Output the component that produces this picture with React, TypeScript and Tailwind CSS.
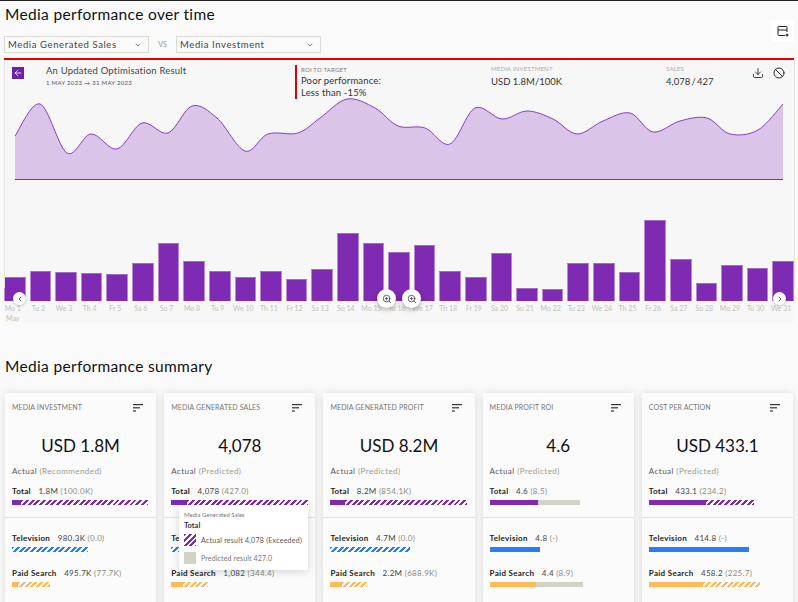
import React from "react";
import { ArrowLeft, ChevronDown, ChevronLeft, ChevronRight, Ban, Download, ZoomIn } from "lucide-react";

const areaPoints: [number, number][] = [
  [0, 47], [25, 15], [52, 64], [76, 45], [102, 60], [127, 34], [153, 44], [177, 17], [202, 29], [230, 62],
  [253, 45], [283, 44], [305, 29], [332, 10], [360, 19], [383, 37], [410, 39], [435, 55], [460, 19], [487, 30],
  [512, 22], [538, 30], [562, 45], [588, 32], [615, 24], [638, 43], [665, 32], [692, 29], [715, 45], [743, 41], [768, 15],
];

// catmull-rom through the points, flat bottom at y=91
function smoothPath(pts: [number, number][]) {
  let d = `M${pts[0][0]} ${pts[0][1]}`;
  for (let i = 0; i < pts.length - 1; i++) {
    const p0 = pts[i - 1] || pts[i];
    const p1 = pts[i];
    const p2 = pts[i + 1];
    const p3 = pts[i + 2] || p2;
    const c1x = p1[0] + (p2[0] - p0[0]) / 6;
    const c1y = p1[1] + (p2[1] - p0[1]) / 6;
    const c2x = p2[0] - (p3[0] - p1[0]) / 6;
    const c2y = p2[1] - (p3[1] - p1[1]) / 6;
    d += ` C${c1x} ${c1y} ${c2x} ${c2y} ${p2[0]} ${p2[1]}`;
  }
  return d;
}

const barHeights = [24, 30, 29, 28, 27, 38, 58, 40, 30, 24, 30, 22, 32, 68, 58, 49, 56, 30, 24, 48, 13, 12, 38, 38, 29, 81, 42, 18, 36, 33, 40];
const dayLabels = ["Mo 1", "Tu 2", "We 3", "Th 4", "Fr 5", "Sa 6", "Su 7", "Mo 8", "Tu 9", "We 10", "Th 11", "Fr 12", "Sa 13", "Su 14", "Mo 15", "Tu 16", "We 17", "Th 18", "Fr 19", "Sa 20", "Su 21", "Mo 22", "Tu 23", "We 24", "Th 25", "Fr 26", "Sa 27", "Su 28", "Mo 29", "Tu 30", "We 31"];

const solidClass = { purple: "bg-[#7f2ab2]", blue: "bg-[#2a7df6]", orange: "bg-[#ffb957]" };
const hatchClass = {
  purple: "bg-[repeating-linear-gradient(135deg,#7f2ab2_0,#7f2ab2_2px,transparent_2px,transparent_4px)]",
  blue: "bg-[repeating-linear-gradient(135deg,#2a7df6_0,#2a7df6_2px,transparent_2px,transparent_4px)]",
  orange: "bg-[repeating-linear-gradient(135deg,#ffb957_0,#ffb957_2px,transparent_2px,transparent_4px)]",
};

type Color = "purple" | "blue" | "orange";
type Meter = { label: string; value: string; extra: string; solid: number; rest: number; restKind: "hatch" | "grey" };

const cards: { title: string; big: string; note: string; total: Meter; tv: Meter; paid: Meter }[] = [
  {
    title: "MEDIA INVESTMENT", big: "USD 1.8M", note: "(Recommended)",
    total: { label: "Total", value: "1.8M", extra: "(100.0K)", solid: 9, rest: 127, restKind: "hatch" },
    tv: { label: "Television", value: "980.3K", extra: "(0.0)", solid: 0, rest: 76, restKind: "hatch" },
    paid: { label: "Paid Search", value: "495.7K", extra: "(77.7K)", solid: 6, rest: 32, restKind: "hatch" },
  },
  {
    title: "MEDIA GENERATED SALES", big: "4,078", note: "(Predicted)",
    total: { label: "Total", value: "4,078", extra: "(427.0)", solid: 16, rest: 121, restKind: "hatch" },
    tv: { label: "Television", value: "", extra: "", solid: 0, rest: 76, restKind: "hatch" },
    paid: { label: "Paid Search", value: "1,082", extra: "(344.4)", solid: 12, rest: 25, restKind: "hatch" },
  },
  {
    title: "MEDIA GENERATED PROFIT", big: "USD 8.2M", note: "(Predicted)",
    total: { label: "Total", value: "8.2M", extra: "(854.1K)", solid: 15, rest: 122, restKind: "hatch" },
    tv: { label: "Television", value: "4.7M", extra: "(0.0)", solid: 0, rest: 80, restKind: "hatch" },
    paid: { label: "Paid Search", value: "2.2M", extra: "(688.9K)", solid: 12, rest: 25, restKind: "hatch" },
  },
  {
    title: "MEDIA PROFIT ROI", big: "4.6", note: "(Predicted)",
    total: { label: "Total", value: "4.6", extra: "(8.5)", solid: 48, rest: 42, restKind: "grey" },
    tv: { label: "Television", value: "4.8", extra: "(-)", solid: 50, rest: 0, restKind: "grey" },
    paid: { label: "Paid Search", value: "4.4", extra: "(8.9)", solid: 46, rest: 47, restKind: "grey" },
  },
  {
    title: "COST PER ACTION", big: "USD 433.1", note: "(Predicted)",
    total: { label: "Total", value: "433.1", extra: "(234.2)", solid: 57, rest: 48, restKind: "hatch" },
    tv: { label: "Television", value: "414.8", extra: "(-)", solid: 100, rest: 0, restKind: "hatch" },
    paid: { label: "Paid Search", value: "458.2", extra: "(225.7)", solid: 54, rest: 57, restKind: "hatch" },
  },
];

function SortIcon() {
  return (
    <svg width="10" height="8" viewBox="0 0 10 8" className="text-[#333]">
      <rect x="0" y="0" width="10" height="1.2" fill="currentColor" />
      <rect x="0" y="3.2" width="7" height="1.2" fill="currentColor" />
      <rect x="0" y="6.4" width="3" height="1.2" fill="currentColor" />
    </svg>
  );
}

function MeterRow({ m, color }: { m: Meter; color: Color }) {
  return (
    <div>
      <div className="flex h-[12px] items-center gap-[7.5px] whitespace-nowrap text-[8px] leading-[12px] tracking-[0.3px]">
        <span className="font-bold text-[#222]">{m.label}</span>
        <span className="text-[#444]">
          {m.value} <span className="text-[#8c8c80]">{m.extra}</span>
        </span>
      </div>
      <div className="mt-[3px] flex h-[5px]">
        {m.solid > 0 && <div className={`h-full ${solidClass[color]}`} style={{ width: m.solid }} />}
        {m.rest > 0 && (
          <div
            className={`h-full ${m.restKind === "grey" ? "bg-[#d2d2c6]" : hatchClass[color]}`}
            style={{ width: m.rest }}
          />
        )}
      </div>
    </div>
  );
}

function SelectBox({ label, width }: { label: string; width: string }) {
  return (
    <div className={`flex h-[17px] items-center justify-between border border-[#ddddd5] pl-[3px] pr-[6px] pt-px text-[9.5px] tracking-[0.6px] text-[#444] ${width}`}>
      <span>{label}</span>
      <ChevronDown size={8} strokeWidth={2} className="text-[#555]" />
    </div>
  );
}

export default function App() {
  const line = smoothPath(areaPoints);

  return (
    <div className="relative h-[602px] w-[798px] overflow-hidden border-t border-t-[#222] bg-[#fafafa] font-['Lato',sans-serif]">
      <h1 className="ml-[5px] mt-[3px] h-[20px] text-[15.5px] leading-[20px] tracking-[0.33px] text-[#111]">
        Media performance over time
      </h1>

      {/* floating config button */}
      <div className="absolute left-[771px] top-[19px] flex h-[22px] w-[23px] items-center justify-center bg-white">
        <svg width="12" height="12" viewBox="0 0 12 12" fill="none" stroke="#222" strokeWidth="1">
          <path d="M8 10.5H2a1 1 0 0 1-1-1v-7a1 1 0 0 1 1-1h7a1 1 0 0 1 1 1V7" />
          <path d="M1 5h9" />
          <circle cx="10" cy="10" r="1.5" fill="#444" stroke="none" />
        </svg>
      </div>

      <div className="ml-[4px] mt-[12px] flex items-center">
        <SelectBox label="Media Generated Sales" width="w-[145px]" />
        <span className="w-[27px] text-center text-[7px] text-[#999]">VS</span>
        <SelectBox label="Media Investment" width="w-[145px]" />
      </div>

      {/* chart panel */}
      <div className="relative ml-[4px] mt-[5px] h-[265px] w-[790px] border-t-2 border-t-[#e00000] bg-[#f7f7f7]">
        <div className="absolute bottom-[35px] left-0 top-0 w-px bg-[#e4e4dc]" />
        <div className="absolute bottom-[35px] right-[-1px] top-0 w-px bg-[#e4e4dc]" />

        <div className="flex h-[38px] pt-[5px]">
          <div className="ml-[8px] mt-[2px] flex h-[12px] w-[12px] items-center justify-center bg-[#6f1fa8]">
            <ArrowLeft size={10} strokeWidth={2} className="text-white" />
          </div>
          <div className="ml-[22px] w-[250px]">
            <div className="text-[9.5px] leading-[12px] tracking-[0.2px] text-[#444]">An Updated Optimisation Result</div>
            <div className="mt-[1px] text-[6px] leading-[9px] tracking-[0.3px] text-[#555]">1 MAY 2023 → 31 MAY 2023</div>
          </div>
          <div className="-ml-px h-[34px] w-[196px] border-l-2 border-l-[#e00000] pl-[4px]">
            <div className="mt-px text-[6px] leading-[8px] tracking-[0.2px] text-[#777]">ROI TO TARGET</div>
            <div className="mt-[1px] text-[9.5px] leading-[12px] tracking-[0.15px] text-[#333]">
              Poor performance:
              <br />
              Less than -15%
            </div>
          </div>
          <div className="w-[175px]">
            <div className="text-[6px] leading-[8px] tracking-[0.2px] text-[#aaa]">MEDIA INVESTMENT</div>
            <div className="mt-[3px] text-[9.5px] leading-[12px] text-[#333]">USD 1.8M/100K</div>
          </div>
          <div className="w-[86px]">
            <div className="text-[6px] leading-[8px] tracking-[0.2px] text-[#aaa]">SALES</div>
            <div className="mt-[3px] text-[9.5px] leading-[12px] text-[#333]">4,078{"\u2009"}/{"\u2009"}427</div>
          </div>
          <Download size={12} strokeWidth={1.7} className="mt-[2px] text-[#222]" />
          <Ban size={12} strokeWidth={1.9} className="ml-[9px] mt-[2px] text-[#222]" />
        </div>

        <svg width="790" height="83" viewBox="0 0 790 83" className="block">
          <g transform="translate(11,-9)">
            <path d={`${line} L768 91 L0 91 Z`} fill="#dac4e8" />
            <path d={line} fill="none" stroke="#8a3cc0" strokeWidth="1" />
            <path d="M0 90.5H768" stroke="#7a35ad" strokeWidth="1" />
          </g>
        </svg>

        <div className="grid h-[120px] w-[790px] grid-cols-[repeat(31,1fr)] items-end gap-x-[4px]">
          {barHeights.map((h, i) => (
            <div
              key={i}
              className="border-x border-t border-x-[#b58ad3] border-t-[#a06cc8] bg-[#7f2ab2]"
              style={{ height: h }}
            />
          ))}
        </div>

        <div className="-ml-[2px] grid w-[790px] grid-cols-[repeat(31,1fr)] gap-x-[4px] pt-[2px]">
          {dayLabels.map((d) => (
            <div key={d} className="whitespace-nowrap text-center text-[7px] leading-[10px] text-[#c2c2ba]">
              {d}
            </div>
          ))}
        </div>
        <div className="ml-[2px] text-[7px] leading-[10px] text-[#c2c2ba]">May</div>

        {/* scroll + zoom controls over the bars */}
        <div className="absolute left-[9px] top-[232px] flex h-[13px] w-[13px] items-center justify-center rounded-full bg-white shadow-[0_1px_3px_rgba(0,0,0,0.2)]">
          <ChevronLeft size={8} strokeWidth={2.5} className="text-[#444]" />
        </div>
        <div className="absolute left-[769px] top-[232px] flex h-[13px] w-[13px] items-center justify-center rounded-full bg-white shadow-[0_1px_3px_rgba(0,0,0,0.2)]">
          <ChevronRight size={8} strokeWidth={2.5} className="text-[#444]" />
        </div>
        <div className="absolute left-[373px] top-[229px] flex h-[19px] w-[19px] items-center justify-center rounded-full bg-white shadow-[0_2px_5px_rgba(0,0,0,0.3)]">
          <ZoomIn size={10} strokeWidth={1.8} className="text-[#333]" />
        </div>
        <div className="absolute left-[398px] top-[229px] flex h-[19px] w-[19px] items-center justify-center rounded-full bg-white shadow-[0_2px_5px_rgba(0,0,0,0.3)]">
          <ZoomIn size={10} strokeWidth={1.8} className="text-[#333]" />
        </div>
      </div>

      <h2 className="ml-[5px] mt-[33px] h-[20px] text-[15.5px] leading-[20px] tracking-[0.33px] text-[#111]">
        Media performance summary
      </h2>

      {/* summary cards */}
      <div className="relative mt-[17px] grid grid-cols-5 gap-x-[8px] px-[5px]">
        {cards.map((c) => (
          <div key={c.title} className="h-[260px] bg-[#fbfbfb] shadow-[0_0_8px_rgba(0,0,0,0.13)]">
            <div className="h-[125px] border-b border-b-[#e2e2da] px-[7px] pt-[10px]">
              <div className="flex items-center justify-between pr-[6px]">
                <span className="whitespace-nowrap text-[7px] leading-[9px] tracking-[0.12px] text-[#777]">{c.title}</span>
                <SortIcon />
              </div>
              <div className="mt-[22px] text-center text-[17px] leading-[24px] text-[#111]">{c.big}</div>
              <div className="mt-[7px] text-[8px] leading-[12px] tracking-[0.45px] text-[#555]">
                Actual <span className="text-[#9a9a8e]">{c.note}</span>
              </div>
              <div className="mt-[8px]">
                <MeterRow m={c.total} color="purple" />
              </div>
            </div>
            <div className="flex flex-col gap-[15px] px-[7px] pt-[14px]">
              <MeterRow m={c.tv} color="blue" />
              <MeterRow m={c.paid} color="orange" />
            </div>
          </div>
        ))}

        {/* tooltip on the sales bar */}
        <div className="absolute left-[179px] top-[112px] h-[65px] w-[129px] bg-white px-[5px] pt-[5px] shadow-[0_2px_8px_rgba(0,0,0,0.15)]">
          <div className="text-[6px] leading-[9px] text-[#777]">Media Generated Sales</div>
          <div className="mt-[1px] text-[7.5px] font-bold leading-[11px] text-[#333]">Total</div>
          <div className="mt-[3px] flex items-center gap-[5px]">
            <div className="h-[12px] w-[12px] bg-[repeating-linear-gradient(135deg,#7f2ab2_0,#7f2ab2_2px,transparent_2px,transparent_4px)]" />
            <span className="whitespace-nowrap text-[7px] tracking-[0.26px] text-[#555]">Actual result 4,078 (Exceeded)</span>
          </div>
          <div className="mt-[6px] flex items-center gap-[5px]">
            <div className="h-[12px] w-[12px] bg-[#d2d2c6]" />
            <span className="whitespace-nowrap text-[7px] tracking-[0.15px] text-[#777]">Predicted result 427.0</span>
          </div>
        </div>
      </div>
    </div>
  );
}
